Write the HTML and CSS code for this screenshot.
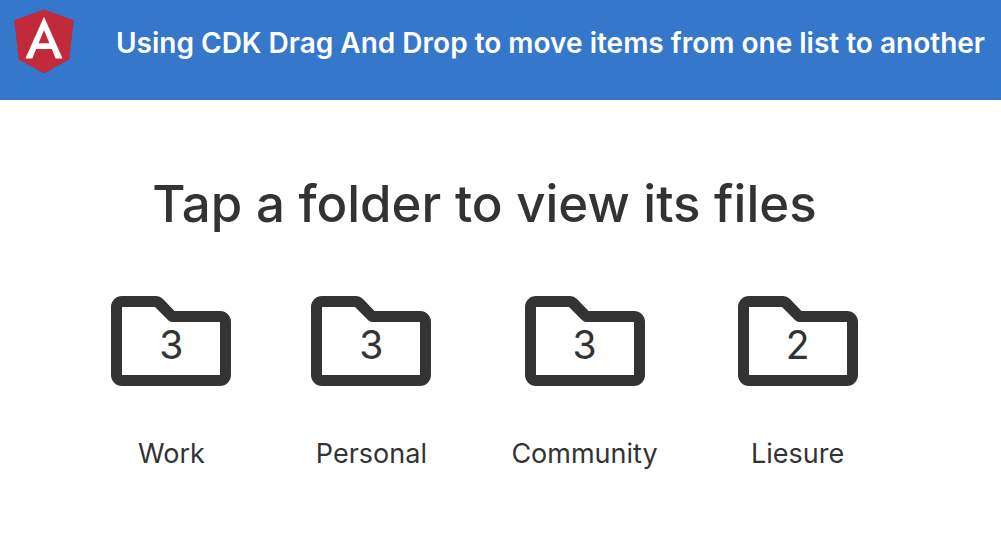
FILE: index.html
```html
<!DOCTYPE html>
<html lang="en">
<head>
<meta charset="utf-8">
<meta name="viewport" content="width=device-width, initial-scale=1">
<title>CDK Drag And Drop</title>
<link rel="stylesheet" href="styles.css">
</head>
<body>
<svg class="sprite" aria-hidden="true">
  <symbol id="folder" viewBox="0 0 120 90">
    <path fill="currentColor" fill-rule="evenodd" d="M11 0H45Q49 0 52 3L63.500 15H109A11 11 0 0 1 120 26V79A11 11 0 0 1 109 90H11A11 11 0 0 1 0 79V11A11 11 0 0 1 11 0ZM11 11V79H109V26H61Q59 26 57 24L44 11Z"/>
  </symbol>
</svg>
<header class="toolbar">
  <svg class="logo" viewBox="0 0 250 250" role="img" aria-label="Angular">
    <path fill="#c12a3a" d="M125 30L31.9 63.2L46.1 186.3L125 230L203.9 186.3L218.1 63.2Z"/>
    <path fill="#fff" d="M125 52.1L66.8 182.6H88.5L100.2 153.4H149.6L161.3 182.6H183ZM142 135.4H108L125 94.5Z"/>
  </svg>
  <span class="title">Using CDK Drag And Drop to move items from one list to another</span>
</header>
<main class="content">
  <h1 class="heading">Tap a folder to view its files</h1>
  <div class="folders">
    <button class="folder" type="button">
      <span class="picture"><svg class="icon" aria-hidden="true"><use href="#folder"/></svg><span class="count">3</span></span>
      <span class="name">Work</span>
    </button>
    <button class="folder" type="button">
      <span class="picture"><svg class="icon" aria-hidden="true"><use href="#folder"/></svg><span class="count">3</span></span>
      <span class="name">Personal</span>
    </button>
    <button class="folder" type="button">
      <span class="picture"><svg class="icon" aria-hidden="true"><use href="#folder"/></svg><span class="count">3</span></span>
      <span class="name">Community</span>
    </button>
    <button class="folder" type="button">
      <span class="picture"><svg class="icon" aria-hidden="true"><use href="#folder"/></svg><span class="count">2</span></span>
      <span class="name">Liesure</span>
    </button>
  </div>
</main>
</body>
</html>
```

FILE: styles.css
```css
* {
  box-sizing: border-box;
}

body {
  margin: 0;
  background: #fff;
  color: #333;
  font-family: Inter, "Liberation Sans", sans-serif;
}

.sprite {
  display: none;
}

.toolbar {
  display: flex;
  align-items: center;
  gap: 32px;
  padding: 0 0 20px 4px;
  background: #3577cb;
  color: #fff;
}

.logo {
  flex: none;
  width: 80px;
  height: 80px;
}

.title {
  padding-top: 6px;
  font-size: 28px;
  font-weight: 600;
  line-height: 32px;
}

.content {
  display: flex;
  flex-direction: column;
  align-items: center;
  gap: 58px;
  padding: 70px 32px 72px 0;
}

.heading {
  margin: 0;
  font-size: 51px;
  font-weight: 500;
  line-height: 68px;
  text-align: center;
}

.folders {
  display: flex;
  flex-wrap: wrap;
  justify-content: center;
  gap: 32px 80px;
}

.folder {
  display: flex;
  flex-direction: column;
  align-items: center;
  gap: 48px;
  min-width: 120px;
  padding: 0;
  border: 0;
  background: none;
  color: inherit;
  font: inherit;
  cursor: pointer;
}

.picture {
  display: grid;
  place-items: center;
}

.icon,
.count {
  grid-area: 1 / 1;
}

.icon {
  width: 120px;
  height: 90px;
}

.count {
  padding-top: 8px;
  font-size: 39px;
  line-height: 48px;
}

.name {
  font-size: 27px;
  line-height: 40px;
}
```
